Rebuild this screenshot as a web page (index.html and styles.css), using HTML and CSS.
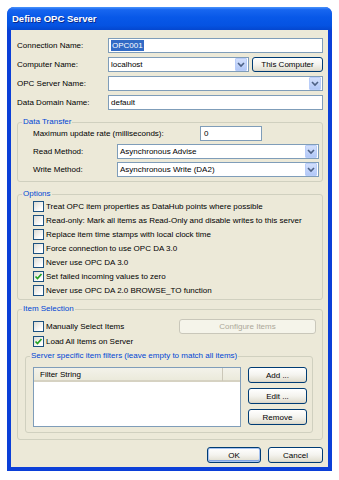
FILE: index.html
```html
<!DOCTYPE html>
<html lang="en">
<head>
    <meta charset="UTF-8">
    <title>Define OPC Server</title>
    <link rel="stylesheet" href="styles.css">
</head>
<body>
    <div class="window">
        <div class="titlebar">Define OPC Server</div>
        <div class="body">
            <div class="form">
                <div class="row">
                    <span class="lbl">Connection Name:</span>
                    <div class="field"><span class="selected">OPC001</span></div>
                </div>
                <div class="row">
                    <span class="lbl">Computer Name:</span>
                    <div class="field combo">localhost<span class="arrow"><svg width="8" height="6" viewBox="0 0 8 6"><polyline points="1,1 4,4 7,1" fill="none" stroke="#4d6185" stroke-width="1.6"/></svg></span></div>
                    <button class="btn this-pc">This Computer</button>
                </div>
                <div class="row">
                    <span class="lbl">OPC Server Name:</span>
                    <div class="field combo"><span class="arrow"><svg width="8" height="6" viewBox="0 0 8 6"><polyline points="1,1 4,4 7,1" fill="none" stroke="#4d6185" stroke-width="1.6"/></svg></span></div>
                </div>
                <div class="row">
                    <span class="lbl">Data Domain Name:</span>
                    <div class="field">default</div>
                </div>
            </div>

            <fieldset class="group transfer">
                <legend>Data Transfer</legend>
                <div class="gbody">
                    <div class="row">
                        <span class="lbl wide">Maximum update rate (milliseconds):</span>
                        <div class="field rate">0</div>
                    </div>
                    <div class="row">
                        <span class="lbl method">Read Method:</span>
                        <div class="field combo">Asynchronous Advise<span class="arrow"><svg width="8" height="6" viewBox="0 0 8 6"><polyline points="1,1 4,4 7,1" fill="none" stroke="#4d6185" stroke-width="1.6"/></svg></span></div>
                    </div>
                    <div class="row">
                        <span class="lbl method">Write Method:</span>
                        <div class="field combo">Asynchronous Write (DA2)<span class="arrow"><svg width="8" height="6" viewBox="0 0 8 6"><polyline points="1,1 4,4 7,1" fill="none" stroke="#4d6185" stroke-width="1.6"/></svg></span></div>
                    </div>
                </div>
            </fieldset>

            <fieldset class="group options">
                <legend>Options</legend>
                <div class="gbody">
                    <div class="check"><span class="box"></span>Treat OPC item properties as DataHub points where possible</div>
                    <div class="check"><span class="box"></span>Read-only: Mark all items as Read-Only and disable writes to this server</div>
                    <div class="check"><span class="box"></span>Replace item time stamps with local clock time</div>
                    <div class="check"><span class="box"></span>Force connection to use OPC DA 3.0</div>
                    <div class="check"><span class="box"></span>Never use OPC DA 3.0</div>
                    <div class="check"><span class="box"><svg width="9" height="9" viewBox="0 0 9 9"><polyline points="1.5,4.5 3.5,6.5 7.5,2" fill="none" stroke="#21a121" stroke-width="1.7"/></svg></span>Set failed incoming values to zero</div>
                    <div class="check"><span class="box"></span>Never use OPC DA 2.0 BROWSE_TO function</div>
                </div>
            </fieldset>

            <fieldset class="group items">
                <legend>Item Selection</legend>
                <div class="gbody">
                    <div class="item-row">
                        <div class="check"><span class="box"></span>Manually Select Items</div>
                        <button class="btn configure" disabled>Configure Items</button>
                    </div>
                    <div class="check"><span class="box"><svg width="9" height="9" viewBox="0 0 9 9"><polyline points="1.5,4.5 3.5,6.5 7.5,2" fill="none" stroke="#21a121" stroke-width="1.7"/></svg></span>Load All Items on Server</div>

                    <fieldset class="group filters">
                        <legend>Server specific item filters (leave empty to match all items)</legend>
                        <div class="filter-body">
                            <div class="listview">
                                <div class="lv-head">
                                    <span class="col">Filter String</span>
                                    <span class="col rest"></span>
                                </div>
                            </div>
                            <div class="side-buttons">
                                <button class="btn">Add ...</button>
                                <button class="btn">Edit ...</button>
                                <button class="btn">Remove</button>
                            </div>
                        </div>
                    </fieldset>
                </div>
            </fieldset>

            <div class="footer">
                <button class="btn default ok">OK</button>
                <button class="btn cancel">Cancel</button>
            </div>
        </div>
    </div>
</body>
</html>
```

FILE: styles.css
```css
* {
    box-sizing: border-box;
}
body {
    margin: 0;
    padding: 7px;
    background: #fff;
    font-family: "Liberation Sans", Arial, sans-serif;
    font-size: 8px;
    color: #000;
}
.window {
    width: 325px;
    background: #0b3fd8;
    border-radius: 7px 7px 0 0;
    padding-bottom: 4px;
}
.titlebar {
    height: 23px;
    line-height: 24px;
    padding-left: 5px;
    border-radius: 7px 7px 0 0;
    background: linear-gradient(#4a94fb 0%, #1766f0 12%, #0858e8 45%, #0553e2 80%, #0447cf 100%);
    color: #fff;
    font-weight: bold;
    font-size: 9.5px;
    text-shadow: 1px 1px 0 #0a2a8a;
}
.body {
    width: 317px;
    margin: 0 4px;
    background: #ece9d8;
    padding: 8px 5px 4px 6px;
}
.form {
    display: flex;
    flex-direction: column;
    gap: 4px;
}
.row {
    display: flex;
    align-items: center;
    height: 15px;
}
.lbl {
    width: 91px;
    flex: none;
}
.lbl.wide {
    width: 167px;
}
.lbl.method {
    width: 84px;
}
.field {
    flex: 1;
    min-width: 0;
    height: 15px;
    border: 1px solid #7f9db9;
    background: #fff;
    display: flex;
    align-items: center;
    padding-left: 2px;
    white-space: nowrap;
}
.field.rate {
    flex: none;
    width: 62px;
    padding-left: 3px;
}
.selected {
    background: #316ac5;
    color: #fff;
    padding: 0 1px;
    line-height: 11px;
}
.combo {
    padding-right: 1px;
}
.arrow {
    margin-left: auto;
    width: 12px;
    height: 13px;
    border: 1px solid #b9cdf9;
    border-radius: 1px;
    background: linear-gradient(#d2dffc, #b2c8f7);
    display: flex;
    align-items: center;
    justify-content: center;
}
.btn {
    font-family: inherit;
    font-size: 8px;
    color: #000;
    height: 16px;
    padding: 0;
    border: 1px solid #003c74;
    border-radius: 3px;
    background: linear-gradient(#fff 0%, #f4f3ee 50%, #e3e0d3 90%, #d6d0c5 100%);
}
.btn.this-pc {
    flex: none;
    width: 71px;
    height: 15px;
    margin-left: 3px;
}
.btn.default {
    box-shadow: inset 0 0 0 1px #a6c2f0, inset 0 -1px 0 1px #7fa4e4;
}
.btn:disabled {
    border-color: #c9c7ba;
    background: #f5f4ea;
    color: #aca899;
}
.group {
    margin: 0;
    padding: 0;
    border: 1px solid #d0d0bf;
    border-radius: 3px;
    min-width: 0;
}
.group legend {
    color: #0046d5;
    padding: 0 1px;
    margin-left: 4px;
    line-height: 10px;
}
.transfer {
    margin-top: 7px;
}
.transfer .gbody {
    margin-top: -1px;
    padding: 0 3px 4px 15px;
    display: flex;
    flex-direction: column;
    gap: 3px;
}
.options {
    margin-top: 7px;
}
.options .gbody {
    padding: 0 3px 2px 15px;
}
.check {
    display: flex;
    align-items: center;
    gap: 2px;
    height: 14px;
    white-space: nowrap;
}
.box {
    width: 11px;
    height: 11px;
    flex: none;
    border: 1px solid #1c5180;
    background: linear-gradient(135deg, #dcdbd3, #fff 80%);
    display: flex;
    align-items: center;
    justify-content: center;
}
.items {
    margin-top: 4px;
}
.items > .gbody {
    padding: 5px 6px 6px 7px;
}
.items > .gbody > .check {
    padding-left: 8px;
}
.item-row {
    display: flex;
    justify-content: space-between;
    align-items: center;
    height: 15px;
}
.item-row .check {
    padding-left: 8px;
}
.btn.configure {
    width: 137px;
    height: 15px;
}
.filters {
    margin: 3px 3px 0 0;
}
.filter-body {
    display: grid;
    grid-template-columns: 208px 59px;
    column-gap: 7px;
    padding: 6px 0 5px 7px;
}
.listview {
    height: 60px;
    border: 1px solid #7f9db9;
    background: #fff;
}
.lv-head {
    display: grid;
    grid-template-columns: 189px 1fr;
    height: 14px;
    background: linear-gradient(#f3f2ea, #ebeadb);
    border-bottom: 2px solid #d6d2c2;
}
.col {
    padding-left: 6px;
    line-height: 13px;
    border-right: 1px solid #cbc7b8;
}
.col.rest {
    border-right: 0;
}
.side-buttons {
    display: flex;
    flex-direction: column;
    gap: 5px;
}
.footer {
    display: flex;
    justify-content: flex-end;
    gap: 7px;
    margin-top: 7px;
}
.btn.ok {
    width: 54px;
}
.btn.cancel {
    width: 55px;
}
```
